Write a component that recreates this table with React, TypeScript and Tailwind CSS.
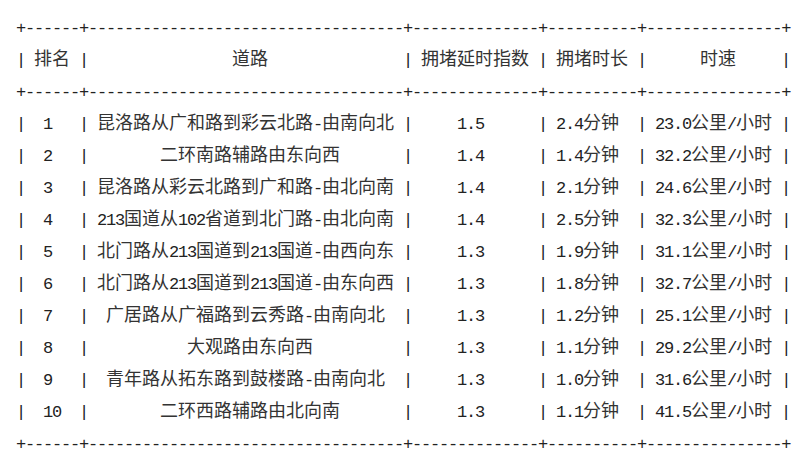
const headers = ["排名", "道路", "拥堵延时指数", "拥堵时长", "时速"];

const rows: string[][] = [
  ["1", "昆洛路从广和路到彩云北路-由南向北", "1.5", "2.4分钟", "23.0公里/小时"],
  ["2", "二环南路辅路由东向西", "1.4", "1.4分钟", "32.2公里/小时"],
  ["3", "昆洛路从彩云北路到广和路-由北向南", "1.4", "2.1分钟", "24.6公里/小时"],
  ["4", "213国道从102省道到北门路-由北向南", "1.4", "2.5分钟", "32.3公里/小时"],
  ["5", "北门路从213国道到213国道-由西向东", "1.3", "1.9分钟", "31.1公里/小时"],
  ["6", "北门路从213国道到213国道-由东向西", "1.3", "1.8分钟", "32.7公里/小时"],
  ["7", "广居路从广福路到云秀路-由南向北", "1.3", "1.2分钟", "25.1公里/小时"],
  ["8", "大观路由东向西", "1.3", "1.1分钟", "29.2公里/小时"],
  ["9", "青年路从拓东路到鼓楼路-由南向北", "1.3", "1.0分钟", "31.6公里/小时"],
  ["10", "二环西路辅路由北向南", "1.3", "1.1分钟", "41.5公里/小时"],
];

// CJK characters take two columns, like wcwidth does
const isWide = (ch: string) => /[\u2e80-\u9fff\uff00-\uffef]/.test(ch);
const strWidth = (s: string) => [...s].reduce((w, c) => w + (isWide(c) ? 2 : 1), 0);

// same centering rule prettytable uses
function center(text: string, width: number) {
  const excess = width - strWidth(text);
  let left = Math.floor(excess / 2);
  let right = excess - left;
  if (excess % 2) {
    if (strWidth(text) % 2) {
      right = left + 1;
    } else {
      left = left + 1;
      right = left - 1;
    }
  }
  return " ".repeat(left) + text + " ".repeat(right);
}

const widths = headers.map((h, i) =>
  Math.max(strWidth(h), ...rows.map((r) => strWidth(r[i])))
);

const border = "+" + widths.map((w) => "-".repeat(w + 2)).join("+") + "+";
const line = (cells: string[]) =>
  "|" + cells.map((c, i) => " " + center(c, widths[i]) + " ").join("|") + "|";

const lines = [border, line(headers), border, ...rows.map(line), border];

// split a line into runs of narrow and wide characters
function runs(s: string) {
  const out: { wide: boolean; text: string }[] = [];
  for (const ch of s) {
    const wide = isWide(ch);
    const last = out[out.length - 1];
    if (last && last.wide === wide) last.text += ch;
    else out.push({ wide, text: ch });
  }
  return out;
}

export default function App() {
  return (
    <div className="w-[806px] h-[464px] bg-white pt-[13px] pl-4 text-[#222] font-['Liberation_Mono',monospace] text-[17px]">
      <div className="flex flex-col">
        {lines.map((l, i) => (
          <div key={i} className="h-8 leading-8 whitespace-pre">
            {runs(l).map((r, j) =>
              r.wide ? (
                <span
                  key={j}
                  className="font-['Noto_Sans_CJK_SC',sans-serif] text-[18px] leading-[18px] text-[#333]"
                >
                  {r.text}
                </span>
              ) : (
                <span key={j} className="tracking-[-1.2px]">
                  {r.text}
                </span>
              )
            )}
          </div>
        ))}
      </div>
    </div>
  );
}
